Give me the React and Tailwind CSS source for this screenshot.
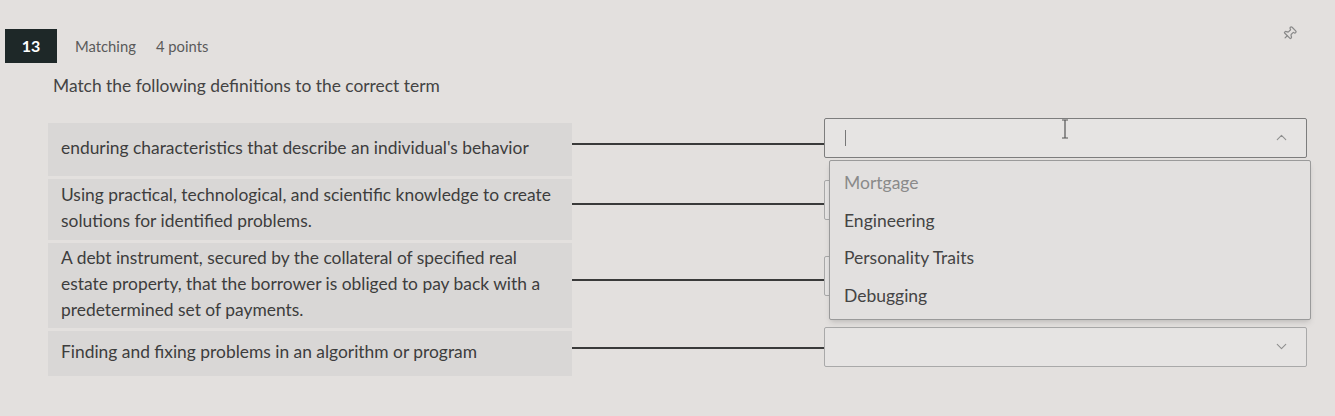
import { Pin, ChevronUp, ChevronDown } from 'lucide-react';

const rows = [
  { text: "enduring characteristics that describe an individual's behavior", h: 'h-[53px]', open: true, shift: 'mb-[24px]' },
  { text: 'Using practical, technological, and scientific knowledge to create solutions for identified problems.', h: 'h-[61px]', shift: 'mb-[20px]' },
  { text: 'A debt instrument, secured by the collateral of specified real estate property, that the borrower is obliged to pay back with a predetermined set of payments.', h: 'h-[85px]', shift: 'mb-[20px]' },
  { text: 'Finding and fixing problems in an algorithm or program', h: 'h-[45px]', shift: 'mb-[14px]' },
];

const options = ['Mortgage', 'Engineering', 'Personality Traits', 'Debugging'];

export default function App() {
  return (
    <div className="w-full h-[416px] overflow-hidden bg-[#e3e0de] text-[#3f3f3f] font-['Lato','Liberation_Sans',sans-serif] relative">
      {/* Header */}
      <div className="flex items-center pl-[5px] pt-[29px]">
        <div className="w-[52px] h-[34px] bg-[#1e2828] text-white font-bold text-[16px] flex items-center justify-center">13</div>
        <span className="ml-[18px] text-[14.8px] text-[#5a5a5a]">Matching</span>
        <span className="ml-[20px] text-[14.8px] text-[#5a5a5a]">4 points</span>
        <Pin size={15} className="ml-auto mr-[38px] -mt-[26px] rotate-45 text-[#8a8a8a]" />
      </div>

      {/* Prompt */}
      <p className="ml-[53px] mt-[10px] text-[17.4px] text-[#444]">Match the following definitions to the correct term</p>

      {/* Matching rows */}
      <div className="ml-[48px] mt-[24px] flex flex-col gap-[3px]">
        {rows.map((row, i) => (
          <div key={i} className={`flex items-center ${row.h}`}>
            <div className="w-[524px] h-full bg-[#d9d7d6] pl-[13px] pr-[12px] pb-[3px] flex items-center text-[17.4px] leading-[26px] text-[#3d3d3d]">
              {row.text}
            </div>
            <div className="w-[252px] h-[2px] mb-[12px] bg-[#3a3a3a]" />
            <div className={`relative ${row.shift}`}>
              <div className={`w-[483px] h-[40px] border ${row.open ? 'border-[#7d7d7d]' : 'border-[#a9a9a9]'} bg-[#e6e4e3] rounded-[2px] flex items-center px-[20px]`}>
                {row.open && <div className="w-px h-[16px] bg-[#777]" />}
                {row.open ? (
                  <ChevronUp size={17} strokeWidth={1.5} className="ml-auto -mr-[4px] text-[#8f8f8f]" />
                ) : (
                  <ChevronDown size={17} strokeWidth={1.5} className="ml-auto -mr-[4px] text-[#8f8f8f]" />
                )}
              </div>

              {row.open && (
                <>
                  {/* mouse I-beam */}
                  <svg width="10" height="20" viewBox="0 0 10 20" className="absolute left-[236px] top-[1px] text-[#555]">
                    <path d="M2 1h6M5 1v18M2 19h6" stroke="currentColor" strokeWidth="1.2" fill="none" />
                  </svg>
                  <div className="absolute left-[5px] top-[42px] w-[482px] bg-[#e2e0df] border border-[#9a9a9a] rounded-[2px] shadow-md py-[4px] z-10">
                    {options.map((o, j) => (
                      <div key={o} className={`h-[37.5px] flex items-center px-[14px] text-[17.5px] ${j === 0 ? 'text-[#8a8a8a]' : 'text-[#444]'}`}>
                        {o}
                      </div>
                    ))}
                  </div>
                </>
              )}
            </div>
          </div>
        ))}
      </div>
    </div>
  );
}
